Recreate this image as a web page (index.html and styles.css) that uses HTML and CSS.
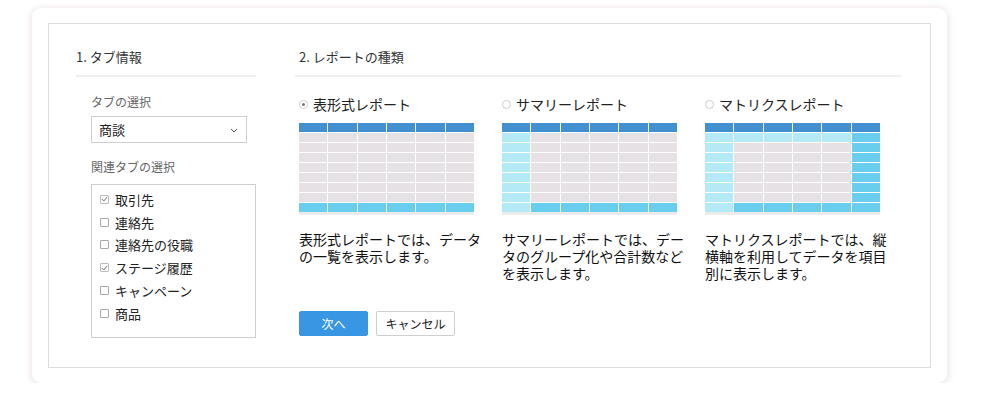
FILE: index.html
```html
<!DOCTYPE html>
<html lang="ja">
<head>
<meta charset="utf-8">
<link rel="stylesheet" href="styles.css">
</head>
<body>
<div class="card">
  <div class="panel">
    <section class="col-left">
      <h2 class="heading">1. タブ情報</h2>
      <div class="left-body">
        <div class="label">タブの選択</div>
        <div class="select">
          <span>商談</span>
          <svg class="chev" width="8" height="5" viewBox="0 0 8 5"><path d="M1 1 L4 4 L7 1" fill="none" stroke="#555" stroke-width="1"/></svg>
        </div>
        <div class="label label-2">関連タブの選択</div>
        <ul class="checklist">
          <li><span class="cb checked"><svg width="7" height="6" viewBox="0 0 7 6"><path d="M0.8 3 L2.8 5 L6.2 0.8" fill="none" stroke="#777" stroke-width="1"/></svg></span>取引先</li>
          <li><span class="cb"></span>連絡先</li>
          <li><span class="cb"></span>連絡先の役職</li>
          <li><span class="cb checked"><svg width="7" height="6" viewBox="0 0 7 6"><path d="M0.8 3 L2.8 5 L6.2 0.8" fill="none" stroke="#777" stroke-width="1"/></svg></span>ステージ履歴</li>
          <li><span class="cb"></span>キャンペーン</li>
          <li><span class="cb"></span>商品</li>
        </ul>
      </div>
    </section>
    <section class="col-right">
      <h2 class="heading heading-r">2. レポートの種類</h2>
      <div class="right-body">
        <div class="types">
          <div class="type">
            <div class="radio-row"><span class="radio on"></span>表形式レポート</div>
            <div class="tbl">
              <i class="h"></i><i class="h"></i><i class="h"></i><i class="h"></i><i class="h"></i><i class="h"></i>
              <i></i><i></i><i></i><i></i><i></i><i></i>
              <i></i><i></i><i></i><i></i><i></i><i></i>
              <i></i><i></i><i></i><i></i><i></i><i></i>
              <i></i><i></i><i></i><i></i><i></i><i></i>
              <i></i><i></i><i></i><i></i><i></i><i></i>
              <i></i><i></i><i></i><i></i><i></i><i></i>
              <i></i><i></i><i></i><i></i><i></i><i></i>
              <i class="m"></i><i class="m"></i><i class="m"></i><i class="m"></i><i class="m"></i><i class="m"></i>
            </div>
            <p class="desc">表形式レポートでは、データの一覧を表示します。</p>
          </div>
          <div class="type">
            <div class="radio-row"><span class="radio"></span>サマリーレポート</div>
            <div class="tbl">
              <i class="h"></i><i class="h"></i><i class="h"></i><i class="h"></i><i class="h"></i><i class="h"></i>
              <i class="l"></i><i></i><i></i><i></i><i></i><i></i>
              <i class="l"></i><i></i><i></i><i></i><i></i><i></i>
              <i class="l"></i><i></i><i></i><i></i><i></i><i></i>
              <i class="l"></i><i></i><i></i><i></i><i></i><i></i>
              <i class="l"></i><i></i><i></i><i></i><i></i><i></i>
              <i class="l"></i><i></i><i></i><i></i><i></i><i></i>
              <i class="l"></i><i></i><i></i><i></i><i></i><i></i>
              <i class="l"></i><i class="m"></i><i class="m"></i><i class="m"></i><i class="m"></i><i class="m"></i>
            </div>
            <p class="desc">サマリーレポートでは、データのグループ化や合計数などを表示します。</p>
          </div>
          <div class="type">
            <div class="radio-row"><span class="radio"></span>マトリクスレポート</div>
            <div class="tbl">
              <i class="h"></i><i class="h"></i><i class="h"></i><i class="h"></i><i class="h"></i><i class="h"></i>
              <i class="l"></i><i class="l"></i><i class="l"></i><i class="l"></i><i class="l"></i><i class="m"></i>
              <i class="l"></i><i></i><i></i><i></i><i></i><i class="m"></i>
              <i class="l"></i><i></i><i></i><i></i><i></i><i class="m"></i>
              <i class="l"></i><i></i><i></i><i></i><i></i><i class="m"></i>
              <i class="l"></i><i></i><i></i><i></i><i></i><i class="m"></i>
              <i class="l"></i><i></i><i></i><i></i><i></i><i class="m"></i>
              <i class="l"></i><i></i><i></i><i></i><i></i><i class="m"></i>
              <i class="l"></i><i class="m"></i><i class="m"></i><i class="m"></i><i class="m"></i><i class="m"></i>
            </div>
            <p class="desc">マトリクスレポートでは、縦横軸を利用してデータを項目別に表示します。</p>
          </div>
        </div>
        <div class="actions">
          <button class="btn btn-primary">次へ</button>
          <button class="btn btn-default">キャンセル</button>
        </div>
      </div>
    </section>
  </div>
</div>
</body>
</html>
```

FILE: styles.css
```css
* { box-sizing: border-box; }
html, body {
  margin: 0;
  padding: 0;
  background: #fff;
  font-family: "Noto Sans CJK JP", "Noto Sans", sans-serif;
  color: #222;
}
body { padding: 8px 0 0 32px; }

.card {
  width: 915px;
  height: 375px;
  border-radius: 9px;
  background: #fff;
  box-shadow: 0 1px 6px 1px rgba(215, 195, 205, 0.5);
  padding: 15px 16px;
}

.panel {
  height: 345px;
  border: 1px solid #dcdcdc;
  display: flex;
  padding: 23px 0 0 27px;
}

.heading {
  margin: 0;
  font-size: 13px;
  font-weight: normal;
  color: #333;
  line-height: 20px;
  padding-bottom: 8px;
  border-bottom: 2px solid #f3eff1;
}
.heading-r { padding-left: 4px; }

.col-left { width: 180px; }
.col-right { width: 606px; margin-left: 39px; }

.left-body { padding-left: 15px; }
.label {
  font-size: 12px;
  color: #666;
  line-height: 18px;
  margin-top: 16px;
}
.label-2 { margin-top: 15px; }

.select {
  margin-top: 5px;
  width: 156px;
  height: 27px;
  border: 1px solid #cfcfcf;
  display: flex;
  align-items: center;
  justify-content: space-between;
  padding: 0 8px 0 7px;
  font-size: 13px;
  color: #222;
}
.chev { margin-top: 1px; }

.checklist {
  list-style: none;
  margin: 8px 0 0;
  padding: 3px 0 0 8px;
  width: 165px;
  height: 154px;
  border: 1px solid #cfcfcf;
}
.checklist li {
  display: flex;
  align-items: center;
  height: 22.8px;
  font-size: 13px;
  color: #222;
}
.cb {
  width: 9px;
  height: 9px;
  border: 1px solid #a8a8a8;
  border-radius: 1px;
  margin-right: 6px;
  display: flex;
  align-items: center;
  justify-content: center;
}
.cb.checked { border-color: #bdbdbd; }

.right-body { padding-left: 4px; }
.types {
  display: grid;
  grid-template-columns: 203px 203px 196px;
  margin-top: 18px;
}
.radio-row {
  display: flex;
  align-items: center;
  font-size: 14px;
  line-height: 18px;
  color: #222;
  height: 18px;
}
.radio {
  width: 9px;
  height: 9px;
  border: 1px solid #cfcfcf;
  border-radius: 50%;
  margin-right: 5px;
  display: flex;
  align-items: center;
  justify-content: center;
}
.radio.on::after {
  content: "";
  width: 3px;
  height: 3px;
  border-radius: 50%;
  background: #777;
}

.tbl {
  margin-top: 10px;
  width: 175px;
  display: grid;
  grid-template-columns: repeat(6, 1fr);
  grid-auto-rows: 9px;
  gap: 1px;
  background: #fff;
  box-shadow: 0 3px 0 #ececec;
  margin-bottom: 3px;
}
.tbl i { display: block; background: #e5e1e5; }
.tbl i.h { background: #4290cf; }
.tbl i.m { background: #69cdee; }
.tbl i.l { background: #b4e9f6; }

.desc {
  margin: 19px 0 0;
  width: 190px;
  font-size: 14px;
  line-height: 17px;
  color: #111;
}

.actions {
  display: flex;
  gap: 8px;
  margin-top: 29px;
}
.btn {
  font-family: inherit;
  font-size: 12px;
  height: 25px;
  border-radius: 2px;
  padding: 0;
  cursor: pointer;
}
.btn-primary {
  width: 69px;
  background: #3996e3;
  border: 1px solid #3996e3;
  color: #fff;
}
.btn-default {
  width: 79px;
  background: #fff;
  border: 1px solid #cfcfcf;
  color: #222;
}
```
